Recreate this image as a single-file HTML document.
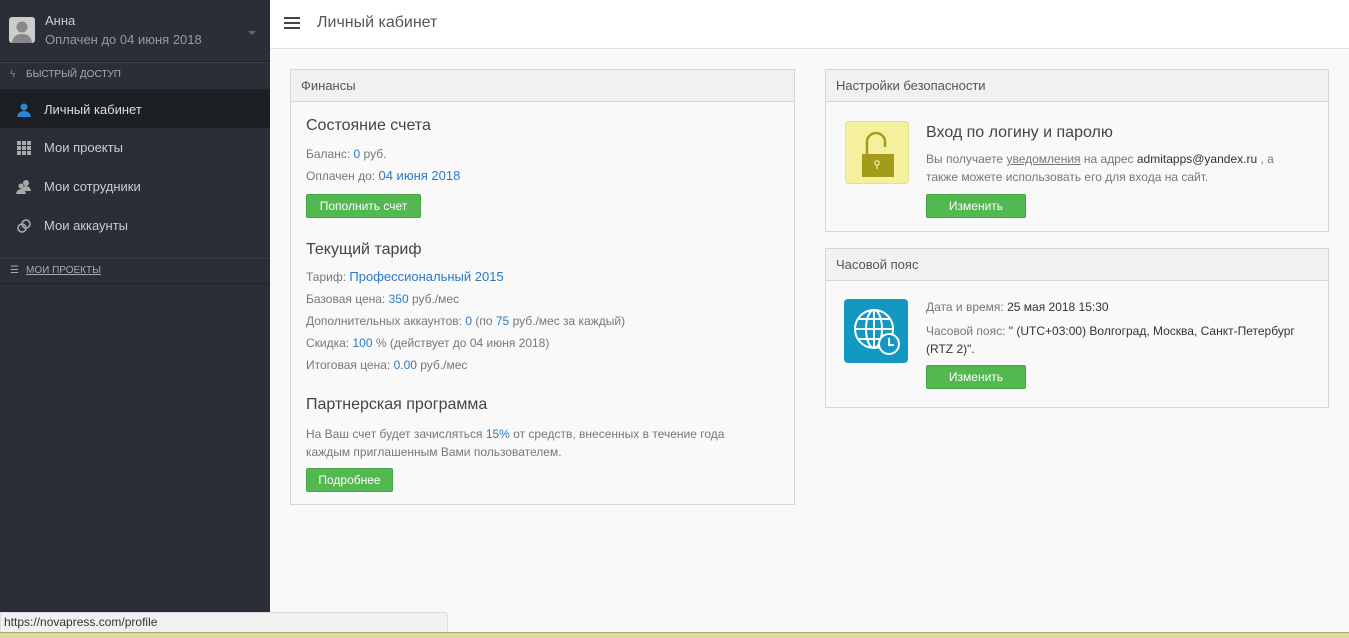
<!DOCTYPE html>
<html><head><meta charset="utf-8"><style>
*{box-sizing:border-box;margin:0;padding:0}
body{width:1349px;height:638px;overflow:hidden;background:#f9f9f9;font-family:"Liberation Sans",sans-serif;color:#555;font-size:12px;position:relative}
.sb{position:absolute;left:0;top:0;width:270px;height:638px;background:#2a2e36}
.user{height:62px;border-bottom:1px solid #1f2228;position:relative}
.av{position:absolute;left:9px;top:17px;width:26px;height:26px;background:#ccc;border-radius:3px;overflow:hidden}
.un{position:absolute;left:45px;top:13px;color:#ccc;font-size:13px}
.us{position:absolute;left:45px;top:32px;color:#999;font-size:13px}
.car{position:absolute;left:248px;top:31px;border:4px solid transparent;border-top:4px solid #666}
.sec{height:28px;border-bottom:1px solid #1f2228;border-top:1px solid #383c45;color:#aaa;font-size:10px;line-height:24px;padding-left:26px;position:relative}
.it{height:39px;line-height:39px;color:#ccc;font-size:13px;padding-left:44px;position:relative}
.it.act{background:#1b1e23;color:#ddd;height:38px}
.ic{position:absolute;left:16px;top:12px;width:16px;height:16px}
.top{position:absolute;left:270px;top:0;right:0;height:49px;background:#fff;border-bottom:1px solid #e3e3e3}
.top h1{position:absolute;left:47px;top:14px;font-size:16px;font-weight:normal;color:#555}
.hb{position:absolute;left:14px;top:17px;width:16px;height:2px;background:#444;box-shadow:0 5px 0 #444,0 10px 0 #444}
.pn{position:absolute;border:1px solid #d6d6d6;background:#f9f9f9}
.ph{height:32px;background:#f1f1f1;border-bottom:1px solid #d6d6d6;line-height:31px;padding-left:10px;font-size:13px;color:#555}
h3{font-size:16px;font-weight:normal;color:#444;position:absolute}
.l{position:absolute;font-size:12px;color:#777;white-space:nowrap}
.b{color:#2a7bc6}.k{color:#333}
.btn{position:absolute;background:#52b84f;border:1px solid #45a543;color:#fff;font-size:12px;text-align:center;line-height:22px;height:24px;border-radius:2px}
</style></head><body>
<div class="sb">
 <div class="user"><div class="av"><svg width="26" height="26"><circle cx="13" cy="10" r="5.5" fill="#888"/><path d="M3 26 Q4 17 13 17 Q22 17 23 26Z" fill="#888"/></svg></div>
 <div class="un">Анна</div><div class="us">Оплачен до 04 июня 2018</div><div class="car"></div></div>
 <div class="sec"><span style="position:absolute;left:10px;color:#888">ϟ</span>БЫСТРЫЙ ДОСТУП</div>
 <div class="it act"><svg class="ic" viewBox="0 0 16 16"><circle cx="8" cy="5" r="3.5" fill="#2a86d0"/><path d="M1 15 Q2 9 8 9 Q14 9 15 15Z" fill="#2a86d0"/></svg>Личный кабинет</div>
 <div class="it"><svg class="ic" viewBox="0 0 16 16" fill="#aaa"><rect x="1" y="1" width="4" height="4"/><rect x="6" y="1" width="4" height="4"/><rect x="11" y="1" width="4" height="4"/><rect x="1" y="6" width="4" height="4"/><rect x="6" y="6" width="4" height="4"/><rect x="11" y="6" width="4" height="4"/><rect x="1" y="11" width="4" height="4"/><rect x="6" y="11" width="4" height="4"/><rect x="11" y="11" width="4" height="4"/></svg>Мои проекты</div>
 <div class="it"><svg class="ic" viewBox="0 0 16 16" fill="#aaa"><circle cx="10" cy="4" r="3"/><path d="M5 12 Q6 7 10 7 Q14 7 15 12Z"/><circle cx="5" cy="7" r="2.5"/><path d="M0 15 Q1 10 5 10 Q9 10 10 15Z"/></svg>Мои сотрудники</div>
 <div class="it"><svg class="ic" viewBox="0 0 16 16" fill="none" stroke="#aaa" stroke-width="1.6"><circle cx="6" cy="10" r="4"/><circle cx="10" cy="6" r="4"/></svg>Мои аккаунты</div>
 <div class="sec" style="margin-top:13px;height:26px;color:#aaa"><span style="position:absolute;left:10px;color:#aaa">☰</span><span style="text-decoration:underline">МОИ ПРОЕКТЫ</span></div>
</div>
<div class="top"><div class="hb"></div><h1>Личный кабинет</h1></div>

<div class="pn" style="left:290px;top:69px;width:505px;height:436px">
 <div class="ph">Финансы</div>
 <h3 style="left:15px;top:47px">Состояние счета</h3>
 <div class="l" style="left:15px;top:77px">Баланс: <span class="b">0</span> руб.</div>
 <div class="l" style="left:15px;top:98px">Оплачен до: <span class="b" style="font-size:13px">04 июня 2018</span></div>
 <div class="btn" style="left:15px;top:124px;width:115px">Пополнить счет</div>
 <h3 style="left:15px;top:171px">Текущий тариф</h3>
 <div class="l" style="left:15px;top:199px">Тариф: <span class="b" style="font-size:13px">Профессиональный 2015</span></div>
 <div class="l" style="left:15px;top:222px">Базовая цена: <span class="b">350</span> руб./мес</div>
 <div class="l" style="left:15px;top:244px">Дополнительных аккаунтов: <span class="b">0</span> (по <span class="b">75</span> руб./мес за каждый)</div>
 <div class="l" style="left:15px;top:266px">Скидка: <span class="b">100</span> % (действует до 04 июня 2018)</div>
 <div class="l" style="left:15px;top:288px">Итоговая цена: <span class="b">0.00</span> руб./мес</div>
 <h3 style="left:15px;top:326px">Партнерская программа</h3>
 <div class="l" style="left:15px;top:355px;line-height:18px">На Ваш счет будет зачисляться <span class="b">15%</span> от средств, внесенных в течение года<br>каждым приглашенным Вами пользователем.</div>
 <div class="btn" style="left:15px;top:398px;width:87px">Подробнее</div>
</div>

<div class="pn" style="left:825px;top:69px;width:504px;height:163px">
 <div class="ph">Настройки безопасности</div>
 <div style="position:absolute;left:19px;top:51px;width:64px;height:63px;background:#f4f09e;border:1px solid #e5e08a;border-radius:4px">
  <svg width="64" height="63"><path d="M21 33 V20 a9 9 0 0 1 18 0 V25" fill="none" stroke="#a39c1a" stroke-width="2.5"/><rect x="16" y="32" width="32" height="23" fill="#a39c1a"/><circle cx="31" cy="41" r="2.2" fill="none" stroke="#f4f09e" stroke-width="1.2"/><line x1="31" y1="43" x2="31" y2="47" stroke="#f4f09e" stroke-width="1.2"/></svg></div>
 <h3 style="left:100px;top:54px">Вход по логину и паролю</h3>
 <div class="l" style="left:100px;top:80px;line-height:18px">Вы получаете <span style="text-decoration:underline">уведомления</span> на адрес <span class="k">admitapps@yandex.ru</span> , а<br>также можете использовать его для входа на сайт.</div>
 <div class="btn" style="left:100px;top:124px;width:100px">Изменить</div>
</div>

<div class="pn" style="left:825px;top:248px;width:504px;height:160px">
 <div class="ph">Часовой пояс</div>
 <div style="position:absolute;left:18px;top:50px;width:64px;height:64px;background:#1398c2;border-radius:4px">
  <svg width="64" height="64" fill="none" stroke="#fff" stroke-width="2"><circle cx="30" cy="30" r="19"/><ellipse cx="30" cy="30" rx="8" ry="19"/><line x1="30" y1="11" x2="30" y2="49"/><line x1="11" y1="30" x2="49" y2="30"/><path d="M14 20 H46 M14 40 H46"/><circle cx="45" cy="45" r="10" fill="#1398c2"/><path d="M45 39 V46 H50"/></svg></div>
 <div class="l" style="left:100px;top:51px">Дата и время: <span class="k">25 мая 2018 15:30</span></div>
 <div class="l" style="left:100px;top:73px;line-height:18px">Часовой пояс: <span class="k">" (UTC+03:00) Волгоград, Москва, Санкт-Петербург<br>(RTZ 2)".</span></div>
 <div class="btn" style="left:100px;top:116px;width:100px">Изменить</div>
</div>

<div style="position:absolute;left:0;top:612px;width:448px;height:21px;background:#f1f1f1;border:1px solid #ddd;border-radius:0 3px 0 0;font-size:12px;line-height:19px;padding-left:3px;color:#333">https://novapress.com/profile</div>
<div style="position:absolute;left:0;top:632px;width:1349px;height:6px;background:#dcdca2;border-top:1px solid #a8a870"></div>
</body></html>
